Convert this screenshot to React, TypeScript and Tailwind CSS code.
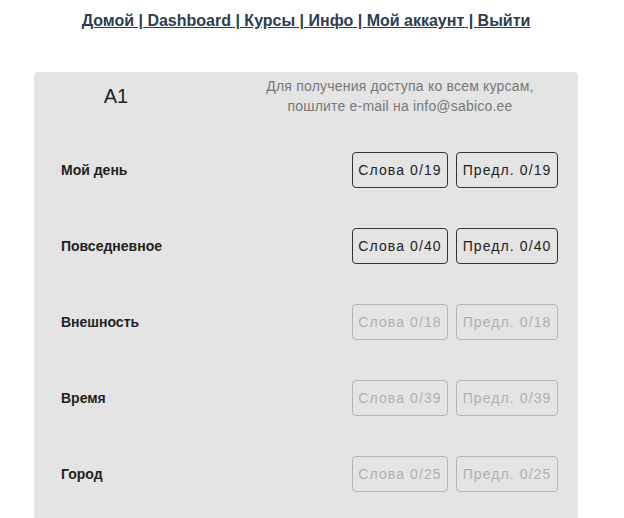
const courses = [
  { title: "Мой день", words: "0/19", sent: "0/19", active: true },
  { title: "Повседневное", words: "0/40", sent: "0/40", active: true },
  { title: "Внешность", words: "0/18", sent: "0/18", active: false },
  { title: "Время", words: "0/39", sent: "0/39", active: false },
  { title: "Город", words: "0/25", sent: "0/25", active: false },
];

const navLinks = ["Домой", "Dashboard", "Курсы", "Инфо", "Мой аккаунт", "Выйти"];

function CountButton({ label, active }: { label: string; active: boolean }) {
  return (
    <button
      className={
        "h-[36px] px-[5.5px] rounded-[4px] border text-[14px] tracking-[1.1px] " +
        (active ? "border-[#333] text-[#222]" : "border-[#b5b5b5] text-[#b0b0b0]")
      }
    >
      {label}
    </button>
  );
}

export default function App() {
  return (
    <div className="w-[612px] bg-white min-h-[518px] font-['Liberation_Sans',Arial,sans-serif]">
      {/* Top nav */}
      <nav className="pt-[11px] text-center text-[16px] font-bold text-[#2c3e50] leading-[20px]">
        {navLinks.map((l, i) => (
          <a key={l} href="#" className="underline">
            {l}
            {i < navLinks.length - 1 ? " | " : ""}
          </a>
        ))}
      </nav>

      {/* Course card */}
      <div className="mx-auto mt-[41px] w-[544px] bg-[#e4e4e4] rounded-t-[4px] pb-[20px]">
        <div className="flex items-center pt-[4px] pb-[16px]">
          <div className="w-[164px] text-center text-[20px] text-[#222]">A1</div>
          <div className="ml-auto mr-[12px] w-[332px] text-center text-[14px] tracking-[0.2px] leading-[20px] text-[#777]">
            Для получения доступа ко всем курсам,
            <br />
            пошлите e-mail на info@sabico.ee
          </div>
        </div>

        {courses.map((c) => (
          <div key={c.title} className="flex h-[76px] items-center pl-[27px] pr-[20px]">
            <div className="text-[14px] font-bold text-[#222]">{c.title}</div>
            <div className="ml-auto flex gap-[8px]">
              <CountButton label={`Слова ${c.words}`} active={c.active} />
              <CountButton label={`Предл. ${c.sent}`} active={c.active} />
            </div>
          </div>
        ))}
      </div>
    </div>
  );
}
